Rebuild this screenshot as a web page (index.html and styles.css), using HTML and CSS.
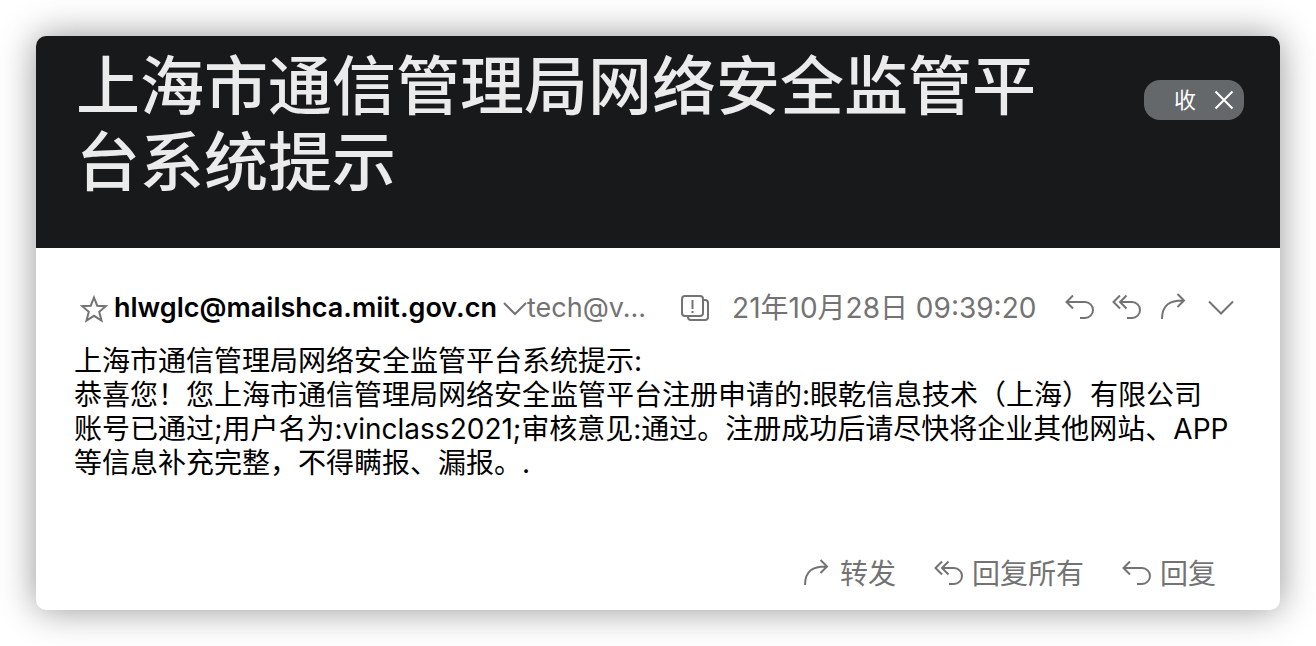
FILE: index.html
```html
<!DOCTYPE html>
<html lang="zh-CN">
<head>
<meta charset="utf-8">
<meta name="viewport" content="width=device-width, initial-scale=1">
<title>上海市通信管理局网络安全监管平台系统提示</title>
<link rel="stylesheet" href="styles.css">
</head>
<body>
<svg class="defs" aria-hidden="true">
  <symbol id="reply" viewBox="0 0 30 26"><path d="M8 .5 1.500 7 8 13.500M1.500 7H20a8 8 0 0 1 0 16h-5"/></symbol>
  <symbol id="reply-all" viewBox="0 0 30 26"><path d="M8 .5 1.500 7 8 13.500M14.500 .5 8 7l6.500 6.500M8 7H20a8 8 0 0 1 0 16h-5"/></symbol>
  <symbol id="forward" viewBox="0 0 30 26"><path d="M3 24C3 10 11 5 25 5.500M18.500 -1l6.500 6.500-6.500 6.500"/></symbol>
  <symbol id="down" viewBox="0 0 30 26"><path d="M3 6.500l12 12L27 6.500"/></symbol>
</svg>
<main class="mail">
  <header class="mail-header">
    <h1 class="subject">上海市通信管理局网络安全监管平台系统提示</h1>
    <div class="folder">
      <span>收</span>
      <button class="plain folder-close" aria-label="移除"><svg class="close-icon" viewBox="0 0 20 20"><path d="M1.500 1.500l17 17M18.500 1.500l-17 17"/></svg></button>
    </div>
  </header>
  <section class="message">
    <div class="meta">
      <button class="plain" aria-label="星标"><svg class="star" viewBox="0 0 28 28"><path d="M14 3.500l3.200 8.200 8.600.5-6.600 5.600 2.300 8.700-7.500-4.700-7.500 4.700 2.300-8.700-6.600-5.600 8.600-.5z"/></svg></button>
      <strong class="sender">hlwglc@mailshca.miit.gov.cn</strong>
      <button class="plain" aria-label="详情"><svg class="chevron" viewBox="0 0 24 16"><path d="M1 3l11 11L23 3"/></svg></button>
      <span class="recipient">tech@v...</span>
      <svg class="notice" viewBox="0 0 30 28"><rect x="2" y="2" width="21" height="20" rx="3"/><path d="M23 6h2a3 3 0 0 1 3 3v14a3 3 0 0 1-3 3H11a3 3 0 0 1-3-3v-1M12.500 6v9M12.500 17v2"/></svg>
      <time class="date" datetime="2021-10-28T09:39:20">21年10月28日 09:39:20</time>
      <div class="tools">
        <button class="plain" aria-label="回复"><svg class="icon"><use href="#reply"/></svg></button>
        <button class="plain" aria-label="回复所有"><svg class="icon"><use href="#reply-all"/></svg></button>
        <button class="plain" aria-label="转发"><svg class="icon"><use href="#forward"/></svg></button>
        <button class="plain" aria-label="更多"><svg class="icon"><use href="#down"/></svg></button>
      </div>
    </div>
    <p class="content">上海市通信管理局网络安全监管平台系统提示:<br>恭喜您！您上海市通信管理局网络安全监管平台注册申请的:眼乾信息技术（上海）有限公司<br>账号已通过;用户名为:vinclass2021;审核意见:通过。注册成功后请尽快将企业其他网站、APP<br>等信息补充完整，不得瞒报、漏报。.</p>
    <footer class="actions">
      <button class="plain"><svg class="icon"><use href="#forward"/></svg>转发</button>
      <button class="plain"><svg class="icon"><use href="#reply-all"/></svg>回复所有</button>
      <button class="plain"><svg class="icon"><use href="#reply"/></svg>回复</button>
    </footer>
  </section>
</main>
</body>
</html>
```

FILE: styles.css
```css
* { box-sizing: border-box; }
body {
  margin: 0;
  padding: 36px;
  background: #fff;
  color: #000;
  font-family: Inter, "Noto Sans CJK SC", sans-serif;
  font-size: 28px;
}
.defs { display: none; }
svg { display: block; flex: none; overflow: visible; fill: none; stroke: #737373; stroke-width: 2; }
symbol { overflow: visible; }
.plain {
  display: flex;
  align-items: center;
  gap: 8px;
  padding: 0;
  border: 0;
  background: none;
  color: #737373;
  font: inherit;
  line-height: 36px;
}
.mail {
  border-radius: 10px;
  overflow: hidden;
  background: #fff;
  box-shadow: 0 0 36px rgba(0, 0, 0, 0.42);
}
.mail-header {
  display: flex;
  justify-content: space-between;
  align-items: flex-start;
  padding: 12px 36px 48px 40px;
  background: #18191b;
}
.subject {
  margin: 0;
  max-width: 1000px;
  color: #ebebeb;
  font-size: 64px;
  font-weight: 500;
  line-height: 76px;
}
.folder {
  display: flex;
  align-items: center;
  gap: 18px;
  height: 40px;
  margin-top: 32px;
  padding: 0 10px 0 30px;
  border-radius: 16px;
  background: #65686b;
  color: #fff;
  font-size: 22px;
  line-height: 36px;
}
.close-icon { width: 20px; height: 20px; stroke: #fff; }
.message { padding: 42px 40px 18px 38px; }
.meta {
  display: flex;
  align-items: center;
  height: 36px;
  padding-left: 6px;
  color: #737373;
  line-height: 36px;
  white-space: nowrap;
}
.star { width: 28px; height: 28px; margin-right: 6px; }
.sender { color: #000; font-size: 27px; font-weight: 600; }
.chevron { width: 24px; height: 16px; margin-left: 6px; }
.recipient { font-size: 27px; }
.notice { width: 30px; height: 28px; margin: 0 22px 0 34px; }
.tools { display: flex; gap: 17px; margin: 0 4px 0 auto; }
.icon { width: 30px; height: 26px; }
.content { margin: 18px 0 76px; line-height: 34px; white-space: nowrap; }
.actions { display: flex; justify-content: flex-end; gap: 38px; padding-right: 24px; }
```
